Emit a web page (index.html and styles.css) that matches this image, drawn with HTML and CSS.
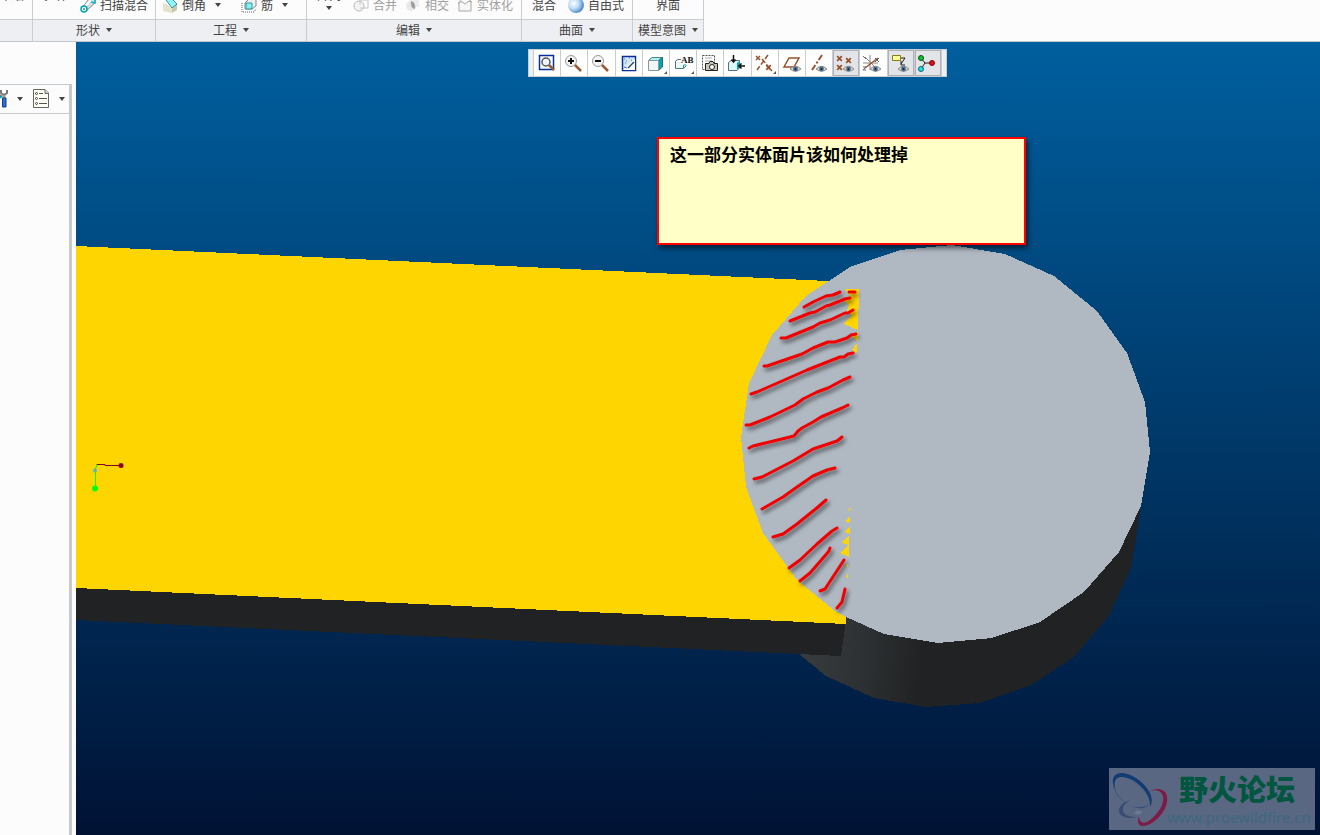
FILE: index.html
```html
<!DOCTYPE html>
<html lang="zh-CN">
<head>
  <meta charset="UTF-8" />
  <title>模型</title>
  <link rel="stylesheet" href="styles.css">
</head>
<body>

  <!-- iconos compartidos -->
  <svg class="defs" width="0" height="0">
    <symbol id="eye" viewBox="0 0 12 8">
      <path d="M0 4Q6-2 12 4Q6 9 0 4z" fill="#d5d0c4" stroke="#8b8378" />
      <circle cx="6" cy="4" r="2.6" fill="#456b94" />
      <circle cx="6" cy="4" r="1" fill="#142b45" />
    </symbol>
    <symbol id="cross" viewBox="0 0 6 6">
      <path d="M1 1L5 5M5 1L1 5" stroke="#98502c" stroke-width="1.5" />
    </symbol>
  </svg>

  <header class="ribbon">
    <section class="group g-datum">
      <div class="tools"><button class="tool cut">草绘</button></div>
      <div class="caption"></div>
    </section>

    <section class="group g-shape">
      <div class="tools">
        <button class="tool cut">拉伸</button>
        <button class="tool">
          <svg width="16" height="16" viewBox="0 0 16 16">
            <path d="M2 11L9 2L15 1V6L7 13z" fill="#ddd" stroke="#888" />
            <path d="M5 9L11 3" stroke="#fff" stroke-width="2" />
            <circle cx="4" cy="12" r="3" fill="#d8ffff" stroke="#00a5b5" stroke-width="1.5" />
            <path d="M10 1L15 0V6L11 5" fill="none" stroke="#00b9c9" stroke-width="1.5" />
            <circle cx="4" cy="12" r="1" fill="#777" />
          </svg>
          扫描混合
        </button>
      </div>
      <button class="caption">形状<i class="arrow"></i></button>
    </section>

    <section class="group g-eng">
      <div class="tools">
        <button class="tool">
          <svg width="16" height="16" viewBox="0 0 16 16">
            <path d="M1 6L6 8L10 12V16L1 14z" fill="#e4e2c8" />
            <path d="M10 11L15 7V13L10 16z" fill="#c9c7ae" />
            <path d="M4 3L8 0L15 7L10 11z" fill="#8ff5f8" stroke="#3a8c9a" />
          </svg>
          倒角<i class="arrow"></i>
        </button>
        <button class="tool">
          <svg width="16" height="16" viewBox="0 0 16 16">
            <path d="M1 6V15H13L15 12" fill="none" stroke="#666" stroke-dasharray="1 1" />
            <path d="M4 6L8 2H15V9L11 12H4z" fill="#eee" stroke="#888" />
            <path d="M5 6H11V12H5z" fill="#7ff3f6" stroke="#39939b" />
          </svg>
          筋<i class="arrow"></i>
        </button>
      </div>
      <button class="caption">工程<i class="arrow"></i></button>
    </section>

    <section class="group g-edit">
      <div class="tools">
        <button class="tool stack"><span>阵列</span><i class="arrow"></i></button>
        <button class="tool" disabled>
          <svg width="16" height="16" viewBox="0 0 16 16">
            <circle cx="6" cy="9" r="5" fill="#f3f3f3" stroke="#bbb" />
            <path d="M7 8V3H15V11H7" fill="none" stroke="#c4c4c4" />
          </svg>
          合并
        </button>
        <button class="tool" disabled>
          <svg width="16" height="16" viewBox="0 0 16 16">
            <circle cx="6" cy="9" r="5" fill="#e9e9e9" />
            <path d="M4 3H14V10H11" fill="#ececec" />
            <path d="M6 4Q11 5 10 12Q5 11 6 4" fill="#9f9f9f" />
          </svg>
          相交
        </button>
        <button class="tool" disabled>
          <svg width="16" height="16" viewBox="0 0 16 16">
            <path d="M2 14V5H6Q8 9 10 5L14 4V14zM1 7L5 2M11 2L15 5" fill="#f7f7f7" stroke="#a8a8a8" />
          </svg>
          实体化
        </button>
      </div>
      <button class="caption">编辑<i class="arrow"></i></button>
    </section>

    <section class="group g-surf">
      <div class="tools">
        <button class="tool">混合</button>
        <button class="tool">
          <svg width="16" height="16" viewBox="0 0 16 16">
            <defs>
              <radialGradient id="ball" cx="35%" cy="40%" r="65%">
                <stop offset="0" stop-color="#fff" />
                <stop offset=".5" stop-color="#bcdcf8" />
                <stop offset="1" stop-color="#4d8ac8" />
              </radialGradient>
            </defs>
            <circle cx="8" cy="8" r="8" fill="url(#ball)" />
          </svg>
          自由式
        </button>
      </div>
      <button class="caption">曲面<i class="arrow"></i></button>
    </section>

    <section class="group g-intent">
      <div class="tools"><button class="tool">界面</button></div>
      <button class="caption">模型意图<i class="arrow"></i></button>
    </section>
  </header>

  <main class="workspace">
    <aside class="sidebar">
      <div class="tree">
        <div class="tree-bar">
          <button class="tree-btn" aria-label="设置">
            <svg width="10" height="20" viewBox="0 0 10 20">
              <path d="M1 1V4L4 6L7 4V1M0 6L2 8" fill="none" stroke="#777" stroke-width="2" />
              <path d="M4 6V10" stroke="#999" stroke-width="3" />
              <path d="M2.500 9H6V18H2.500z" fill="#2f6fd0" stroke="#123c86" />
              <path d="M0 7L1 9" stroke="#00aab8" stroke-width="2" />
            </svg>
            <i class="arrow"></i>
          </button>
          <button class="tree-btn" aria-label="显示">
            <svg width="17" height="20" viewBox="0 0 17 20">
              <path d="M.500 .500H12L15.500 4V18.500H.500z" fill="#fffef4" stroke="#666" />
              <path d="M12 .500V4.500H15.500" fill="#ddd" stroke="#666" />
              <path d="M6 4.500H10M6 9.500H14M6 14.500H14" stroke="#555" />
              <g fill="none" stroke="#444"><circle cx="3.500" cy="4.500" r="1" /><circle cx="3.500" cy="9.500" r="1" /><circle cx="3.500" cy="14.500" r="1" /></g>
            </svg>
            <i class="arrow"></i>
          </button>
        </div>
      </div>
    </aside>

    <div class="viewport">
      <svg class="scene" viewBox="76 42 1244 793" preserveAspectRatio="xMinYMin slice" shape-rendering="crispEdges">
        <defs>
          <linearGradient id="side" gradientUnits="userSpaceOnUse" x1="805" y1="640" x2="922" y2="652">
            <stop offset="0" stop-color="#383b3e" />
            <stop offset=".5" stop-color="#2d3133" />
            <stop offset="1" stop-color="#212223" />
          </linearGradient>
          <filter id="shade" x="-10%" y="-10%" width="120%" height="120%">
            <feDropShadow dx="2" dy="3" stdDeviation="2" flood-color="#000" flood-opacity=".6" />
          </filter>
        </defs>

        <!-- cilindro -->
        <path fill="url(#side)" d="M840 612L799 654L826 676L874 698L926 707L980 703L1031 685L1074 657L1108 617L1131 568L1141 506L1000 500z" />
        <!-- barra -->
        <path fill="#212223" d="M76 588L846 620L841 656L76 620z" />
        <path fill="#ffd500" d="M76 246L828 281L860 283L846 624L76 588z" />
        <path fill="#b0b8c2" d="M850 267L900 250L952 245L1005 254L1054 276L1097 311L1127 353L1145 402L1150 452L1141 506L1119 552L1084 592L1040 622L992 638L938 643L884 634L846 617L835 611L797 580L763 533L746 487L741 437L749 383L772 335L806 296z" />

        <g fill="#ffd500">
          <path d="M845 289H859L858 330L844 324L852 315L847 311L849 305L842 299L850 296z" />
          <path d="M858 331V341L852 337zM857 343V353L852 350z" />
          <path d="M851 508V510L847 511zM850 517V523L845 521zM850 526V534L844 532zM849 535V545L842 543zM849 544V557L840 553zM848 563V567L846 566zM848 573V578L846 577z" />
        </g>

        <!-- trazos rojos a mano -->
        <g class="marks" filter="url(#shade)" shape-rendering="auto">
          <path d="M804 307L813 302L826 296L833 295L840 292M849 292H855" />
          <path d="M790 321L810 313L815 312L826 306L830 305L845 299L850 298" />
          <path d="M781 338L786 338L813 327L820 323L830 320L845 313L848 313L853 310" />
          <path d="M764 366L767 366L802 354L813 348L828 342L835 342L847 338L851 335L856 334" />
          <path d="M751 394L757 392L807 370L840 357L844 357L848 354L853 353" />
          <path d="M746 425L750 425L770 417L795 405L803 399L817 392L828 388L843 380L850 377" />
          <path d="M749 448L753 446L794 436L798 431L802 428L813 422L821 417L842 408L848 405" />
          <path d="M754 479L762 477L793 461L813 449L837 441L842 437" />
          <path d="M762 509L783 497L797 487L813 476L827 470L835 468" />
          <path d="M773 537L783 534L797 524L818 507L826 500" />
          <path d="M789 568L800 560L817 544L832 531L837 528" />
          <path d="M800 581L810 573L823 558L829 551L830 548" />
          <path d="M820 591L825 589L844 560" />
          <path d="M837 608L842 602L845 589" />
        </g>

        <!-- ejes -->
        <g fill="none" shape-rendering="auto">
          <path d="M96 464.500H105V465.500H121" stroke="#8c0025" />
          <path d="M96.500 464V467L95.500 468V488" stroke="#0f0" />
          <circle cx="121" cy="465.500" r="2.500" fill="#8c0025" />
          <circle cx="95" cy="470.500" r="2" fill="#5fb5b8" />
          <circle cx="95" cy="488.500" r="3" fill="#0f0" />
        </g>
      </svg>

      <nav class="viewbar">
        <button aria-label="重新调整">
          <svg viewBox="0 0 26 26"><path d="M6.500 5.500H20.500V19.500H6.500z" fill="#fff" stroke="#0a2f96" stroke-width="1.500" /><circle cx="13" cy="12" r="4" fill="#eef6fb" stroke="#555" stroke-width="1.500" /><path d="M16 15L21 20" stroke="#955a36" stroke-width="2.500" /></svg>
        </button>
        <button aria-label="放大">
          <svg viewBox="0 0 26 26"><circle cx="11" cy="11" r="5.500" fill="#f4f4f4" stroke="#999" /><path d="M8 11H14M11 8V14" stroke="#111" stroke-width="2" /><path d="M15 15L21 21" stroke="#955a36" stroke-width="2.500" /></svg>
        </button>
        <button aria-label="缩小">
          <svg viewBox="0 0 26 26"><circle cx="11" cy="11" r="5.500" fill="#f4f4f4" stroke="#999" /><path d="M8 11H14" stroke="#111" stroke-width="2" /><path d="M15 15L21 21" stroke="#955a36" stroke-width="2.500" /></svg>
        </button>
        <button aria-label="重画">
          <svg viewBox="0 0 26 26"><path d="M7.500 6.500H20.500V20.500H7.500z" fill="#d3e7f8" stroke="#0a2f96" stroke-width="1.500" /><path d="M8 20L20 9V20z" fill="#fff" /><path d="M13 18L19 12" stroke="#27416f" stroke-width="1.500" /><path d="M9 9H10M11 11H12M14 8H15M10 13H11M16 10H17M9 17L12 18" stroke="#3e74bd" /></svg>
        </button>
        <button aria-label="显示样式">
          <svg viewBox="0 0 26 26"><path d="M6.500 10.500L10 7.500H20.500L16.500 10.500z" fill="#a8f4f5" stroke="#49838a" /><path d="M16.500 10.500L20.500 7.500V17L16.500 20.500z" fill="#00a5ad" stroke="#287078" /><path d="M6.500 10.500H16.500V20.500H6.500z" fill="#f1f5f5" stroke="#8b9797" /><path d="M25 21V24H22z" fill="#555" /></svg>
        </button>
        <button aria-label="已保存方向">
          <svg viewBox="0 0 26 26"><path d="M6.500 18.500V11L9 9.500H12M6.500 18.500H14.500L17.500 15.500" fill="none" stroke="#56757a" /><path d="M7 12H12V18H7z" fill="#e9f7f7" /><path d="M14.500 18V15H17" fill="none" stroke="#00a5ad" /><text class="ab" x="12" y="13">AB</text><path d="M25 21V24H22z" fill="#555" /></svg>
        </button>
        <button aria-label="视图管理器">
          <svg viewBox="0 0 26 26"><path d="M6.500 5.500H18.500V19.500H6.500z" fill="#fff" stroke="#555" stroke-dasharray="2 1" /><path d="M9 8H16M9 11H16" stroke="#aaa" /><path d="M9.500 13.500H13L14 11.500H17L18 13.500H21.500V20.500H9.500z" fill="#c9c5b4" stroke="#222" /><circle cx="16" cy="17" r="2.500" fill="#fff" stroke="#222" /></svg>
        </button>
        <button aria-label="透视图">
          <svg viewBox="0 0 26 26"><path d="M5.500 12.500L8 10.500H16.500V18L14 20.500H5.500z" fill="#dff8f8" stroke="#557177" /><path d="M14 13V20L17 17V11z" fill="#00a5ad" /><path d="M10.500 5V12M8.500 9.500L10.500 12L12.500 9.500M22 16H16M18.500 13.500L16 16L18.500 18.500" fill="none" stroke="#111" stroke-width="1.500" /></svg>
        </button>
        <button aria-label="基准显示过滤器">
          <svg viewBox="0 0 26 26"><use href="#cross" x="4" y="5" width="6" height="6" /><use href="#cross" x="14" y="14" width="7" height="7" /><path d="M17 5L6 20M11 9L21 21" stroke="#98502c" stroke-width="1.500" stroke-dasharray="5 2" /><path d="M25 21V24H22z" fill="#555" /></svg>
        </button>
        <button aria-label="平面显示">
          <svg viewBox="0 0 26 26"><path d="M11 8H21L16 17H6z" fill="none" stroke="#98502c" stroke-width="1.500" /><use href="#eye" x="12" y="15" width="11" height="8" /></svg>
        </button>
        <button aria-label="轴显示">
          <svg viewBox="0 0 26 26"><path d="M17 5L7 20" stroke="#98502c" stroke-width="2" stroke-dasharray="6 2 2 2" /><use href="#eye" x="11" y="15" width="11" height="8" /></svg>
        </button>
        <button class="on" aria-label="点显示">
          <svg viewBox="0 0 26 26"><use href="#cross" x="4" y="5" width="7" height="7" /><use href="#cross" x="13" y="7" width="7" height="7" /><use href="#cross" x="4" y="14" width="7" height="7" /><use href="#eye" x="11" y="15" width="11" height="8" /></svg>
        </button>
        <button aria-label="坐标系显示">
          <svg viewBox="0 0 26 26"><path d="M11 5V20M4 13H19M6 7L17 18" stroke="#888" /><path d="M6 18L19 8" stroke="#98502c" stroke-width="1.500" /><path d="M4 6L7 9M16 8L20 12M20 8L16 12M4 17H7L4 20H7" fill="none" stroke="#666" /><use href="#eye" x="11" y="15" width="11" height="8" /></svg>
        </button>
        <button class="on" aria-label="注释显示">
          <svg viewBox="0 0 26 26"><path d="M5.500 5.500H13.500V10.500H5.500z" fill="#ffff9c" stroke="#8a7c12" /><path d="M14 8H18L14 14M14 11V15H18" fill="none" stroke="#222" /><use href="#eye" x="11" y="15" width="11" height="8" /></svg>
        </button>
        <button class="on" aria-label="旋转中心">
          <svg viewBox="0 0 26 26"><path d="M7 8L11 13L7 19M11 13H17" fill="none" stroke="#222" /><circle cx="7" cy="8" r="2.500" fill="#0bc42a" stroke="#064f12" /><circle cx="18" cy="13" r="2.500" fill="#e80c14" stroke="#7c0509" /><circle cx="7" cy="19" r="2.500" fill="#16e0e6" stroke="#08686b" /></svg>
        </button>
      </nav>

      <div class="note">这一部分实体面片该如何处理掉</div>

      <div class="watermark">
        <svg width="60" height="62" viewBox="0 0 60 62" fill-rule="evenodd">
          <path fill="#133c72" d="M7 23C-2 8 9-1 27 10C40 19 46 30 41 39C42 29 35 20 25 13C11 5 2 9 7 23z" />
          <path fill="#364f78" d="M4 17C8 29 19 40 30 39C38 39 42 36 43 29C42 37 37 41 29 40C18 38 6 29 4 17z" />
          <path fill="#7c1c44" d="M39 24C51 17 60 23 58 34C56 46 43 58 34 58C29 58 28 53 30 48C30 54 34 56 38 54C48 48 56 36 54 28C52 22 46 21 39 24z" />
          <path fill="#374c70" d="M21 32C11 35 8 42 11 46C14 50 21 51 28 49C20 49 15 47 14 43C13 39 16 35 21 32z" />
          <path fill="#6b7994" d="M28 42L34 44L29 47L25 45z" />
        </svg>
        <div class="brand">
          <strong>野火论坛</strong>
          <span>www.proewildfire.cn</span>
        </div>
      </div>
    </div>
  </main>

</body>
</html>
```
FILE: styles.css
```css
* {
  box-sizing: border-box;
}

body {
  margin: 0;
  height: 100vh;
  overflow: hidden;
  display: flex;
  flex-direction: column;
  font-family: "Noto Sans CJK SC", sans-serif;
  font-size: 12px;
  color: #444;
  background: #fcfcfc;
}

button {
  margin: 0;
  padding: 0;
  border: none;
  background: none;
  font: inherit;
  color: inherit;
}

.defs {
  position: absolute;
}

.arrow {
  width: 0;
  border: 3px solid transparent;
  border-top: 4px solid #444;
  border-bottom: none;
}

/* cinta superior */
.ribbon {
  display: flex;
  border-bottom: 1px solid #c4c7cb;
}

.group {
  display: flex;
  flex-direction: column;
  border-right: 1px solid #c9ccd0;
}

.g-datum { width: 33px; }
.g-shape { width: 123px; }
.g-eng { width: 151px; }
.g-edit { width: 215px; }
.g-surf { width: 111px; }
.g-intent { width: 71px; }

.tools {
  display: flex;
  align-items: flex-end;
  height: 19px;
  padding: 0 8px 7px;
  gap: 12px;
  overflow: hidden;
}

.g-datum .tools { padding-left: 0; }
.g-shape .tools { padding-left: 11px; }
.g-eng .tools { gap: 20px; padding-left: 6px; }
.g-edit .tools { gap: 8px; padding-left: 10px; }
.g-surf .tools { padding-left: 10px; }
.g-intent .tools { justify-content: center; }

.tool {
  display: flex;
  align-items: center;
  gap: 4px;
  height: 14px;
  line-height: 14px;
  white-space: nowrap;
}

.tool svg {
  flex: none;
}

.tool .arrow {
  margin-left: 5px;
}

.tool:disabled {
  color: #a0a0a0;
}

.tool.cut {
  margin-bottom: 10px;
}

.tool.stack {
  flex-direction: column;
  justify-content: flex-end;
  gap: 4px;
  padding-bottom: 2px;
  margin-right: 4px;
}

.tool.stack .arrow {
  margin: 0;
}

.caption {
  display: flex;
  align-items: center;
  justify-content: center;
  gap: 6px;
  height: 22px;
  padding-bottom: 2px;
  border-top: 1px solid #c9ccd0;
  background: #eeeff2;
  white-space: nowrap;
}

.workspace {
  flex: 1;
  display: flex;
  min-height: 0;
}

/* árbol del modelo */
.sidebar {
  width: 76px;
  padding: 42px 4px 0 0;
}

.tree {
  height: 100%;
  border-top: 1px solid #c6c9ce;
  border-right: 3px solid #c6c9ce;
}

.tree-bar {
  display: flex;
  align-items: center;
  gap: 10px;
  height: 29px;
  padding-bottom: 1px;
  border-bottom: 1px solid #c6c9ce;
}

.tree-btn {
  display: flex;
  align-items: center;
  gap: 7px;
}

.tree-btn + .tree-btn {
  gap: 9px;
}

/* zona gráfica */
.viewport {
  position: relative;
  flex: 1;
  overflow: hidden;
  background: linear-gradient(#005f9e, #001234);
}

.scene {
  display: block;
  width: 100%;
  height: 100%;
}

.marks {
  fill: none;
  stroke: #f00505;
  stroke-width: 3;
  stroke-linecap: round;
  stroke-linejoin: round;
}

.viewbar {
  position: absolute;
  top: 7px;
  left: 452px;
  display: flex;
  width: 419px;
  height: 28px;
  padding: 0 4px;
  border: 1px solid #c9ccd0;
  background: #eeeff2;
}

.viewbar button {
  flex: 1;
  border-left: 1px solid #c9ccd0;
  background: #fff;
}

.viewbar button:last-child {
  border-right: 1px solid #c9ccd0;
}

.viewbar .on {
  background: #e2e4e8;
  box-shadow: inset 0 0 0 1px #aeb2b8;
}

.viewbar svg {
  display: block;
  width: 26px;
  height: 26px;
  margin-left: -1px;
}

.ab {
  font-family: "Liberation Serif", serif;
  font-size: 9px;
  font-weight: bold;
  fill: #111;
}

.note {
  position: absolute;
  top: 95px;
  left: 581px;
  width: 369px;
  height: 108px;
  padding: 3px 11px;
  border: 2px solid #f00;
  background: #ffffc8;
  box-shadow: 2px 3px 5px rgba(0, 0, 0, 0.6);
  font-size: 17px;
  font-weight: bold;
  line-height: 24px;
  color: #000;
}

.watermark {
  position: absolute;
  right: 5px;
  bottom: 5px;
  display: flex;
  width: 206px;
  height: 62px;
  background: #5a6782;
}

.brand {
  display: flex;
  flex-direction: column;
  margin-left: -2px;
}

.brand strong {
  padding-left: 12px;
  font-size: 29px;
  font-weight: 900;
  line-height: 40px;
  color: #00563f;
}

.brand span {
  font-family: "Noto Sans", sans-serif;
  font-size: 15px;
  line-height: 18px;
  color: #3b6780;
}
```
